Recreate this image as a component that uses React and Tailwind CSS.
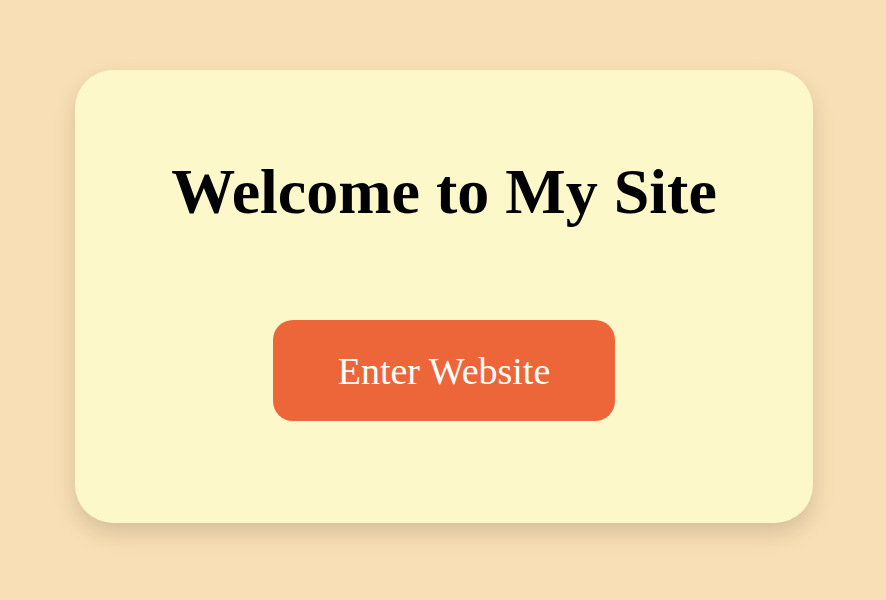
export default function App() {
  return (
    <div className="min-h-[600px] w-full bg-[#f9dfb5] pt-[70px] font-['Liberation_Serif','Times_New_Roman',serif]">
      <div className="ml-[75px] flex w-[738px] flex-col items-center rounded-[38px] bg-[#fdf8c9] pt-[85px] pb-[102px] shadow-[0_10px_22px_rgba(0,0,0,0.15)]">
        <h1 className="text-[64px] font-bold leading-[normal] text-black">Welcome to My Site</h1>
        <button className="mt-[91px] flex h-[101px] w-[342px] items-center justify-center rounded-[20px] bg-[#ed6639] text-[38px] leading-[normal] text-white">
          Enter Website
        </button>
      </div>
    </div>
  );
}
